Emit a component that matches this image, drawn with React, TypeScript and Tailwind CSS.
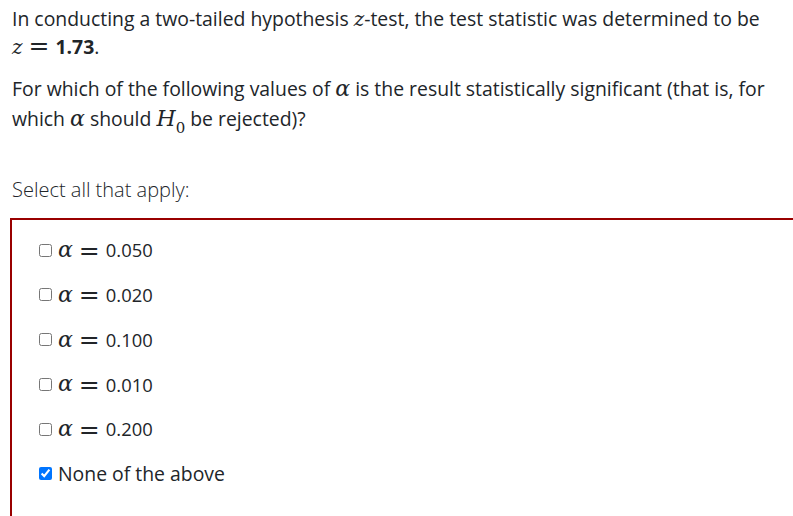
import React from "react"

const sans = "font-['Open_Sans','Noto_Sans',sans-serif]"
const mathIt = "font-['DejaVu_Serif',serif] italic"

const options = [
  { label: "0.050", checked: false },
  { label: "0.020", checked: false },
  { label: "0.100", checked: false },
  { label: "0.010", checked: false },
  { label: "0.200", checked: false },
]

function Alpha() {
  return <span className={`${mathIt} text-[22px] leading-none`}>α</span>
}

function Eq() {
  return <span className="font-['DejaVu_Serif',serif] text-[25px] leading-none mx-[6px]">=</span>
}

export default function App() {
  return (
    <div className={`${sans} text-[19.4px] text-[#212529] bg-white min-h-[516px] overflow-hidden`}>
      <div className="pl-3 pt-[5px]">
        <p className="leading-[28px]">
          In conducting a two-tailed hypothesis <span className={`${mathIt} text-[20px] leading-none`}>z</span>-test, the test statistic was determined to be
          <br />
          <span className={`${mathIt} text-[20px] leading-none`}>z</span>
          <Eq />
          <span className="font-bold">1.73</span>.
        </p>
        <p className="leading-[30px] mt-[13px]">
          For which of the following values of <Alpha /> is the result statistically significant (that is, for
          <br />
          which <Alpha /> should{" "}
          <span className={`${mathIt} text-[22px] leading-none`}>
            H<sub className="not-italic text-[15px] align-[-3px]">0</sub>
          </span>{" "}
          be rejected)?
        </p>
        <p className="mt-[42px] leading-[28px] font-light text-[20px]">Select all that apply:</p>
      </div>

      <div className="mt-[14px] ml-[10px] border-t-2 border-l-2 border-[#990000] pt-[16px] pb-[40px] pl-[27px]">
        <ul className="flex flex-col gap-[16.8px]">
          {options.map((o) => (
            <li key={o.label} className="flex items-center h-[28px]">
              <input type="checkbox" defaultChecked={o.checked} className="w-[13px] h-[13px] m-0 mr-[6px]" />
              <Alpha />
              <Eq />
              <span className="text-[18.4px]">{o.label}</span>
            </li>
          ))}
          <li className="flex items-center h-[28px]">
            <input type="checkbox" defaultChecked className="w-[13px] h-[13px] m-0 mr-[6px]" />
            <span>None of the above</span>
          </li>
        </ul>
      </div>
    </div>
  )
}
